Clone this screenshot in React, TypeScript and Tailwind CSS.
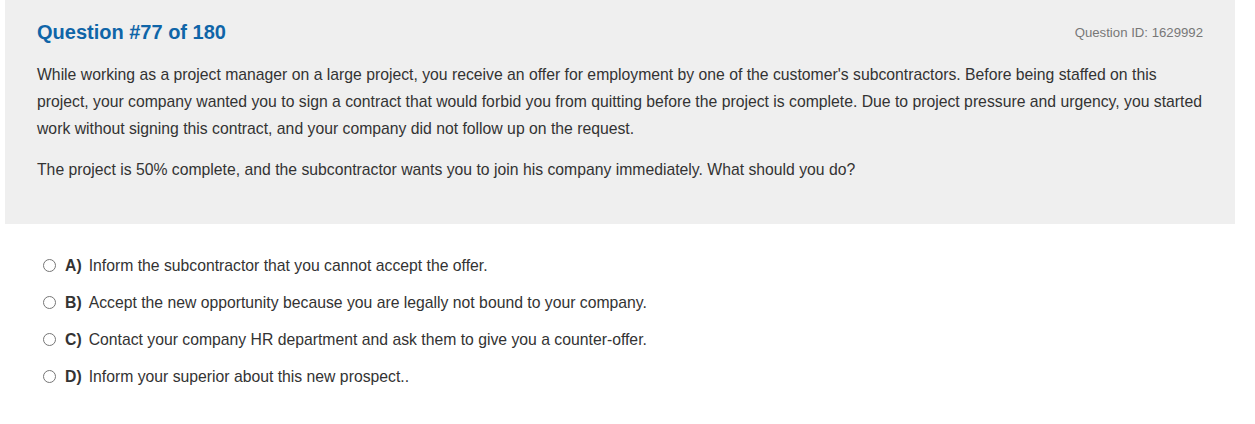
const options = [
  { key: "A", text: "Inform the subcontractor that you cannot accept the offer." },
  { key: "B", text: "Accept the new opportunity because you are legally not bound to your company." },
  { key: "C", text: "Contact your company HR department and ask them to give you a counter-offer." },
  { key: "D", text: "Inform your superior about this new prospect.." },
];

export default function App() {
  return (
    <div className="min-h-[424px] w-[1255px] bg-white font-['Liberation_Sans',Arial,sans-serif] text-[#333]">
      <div className="ml-[5px] h-[224px] w-[1230px] bg-[#efefef] px-[32px] pt-[19px]">
        <div className="flex items-center justify-between">
          <h2 className="text-[20px] font-bold leading-[26px] text-[#0f65a8]">Question #77 of 180</h2>
          <span className="mt-[2px] text-[13.2px] text-[#777]">Question ID: 1629992</span>
        </div>
        <p className="mt-[16px] text-[15.75px] leading-[27px]">
          While working as a project manager on a large project, you receive an offer for employment by one of the customer's subcontractors. Before being staffed on this project, your company wanted you to sign a contract that would forbid you from quitting before the project is complete. Due to project pressure and urgency, you started work without signing this contract, and your company did not follow up on the request.
        </p>
        <p className="mt-[14px] text-[15.75px] leading-[27px]">
          The project is 50% complete, and the subcontractor wants you to join his company immediately. What should you do?
        </p>
      </div>
      <div className="mt-[28px] flex flex-col gap-[10px] pl-[43px]">
        {options.map((o) => (
          <label key={o.key} className="flex h-[27px] items-center text-[15.75px]">
            <span className="mr-[9px] h-[13px] w-[13px] rounded-full border border-[#767676] bg-white" />
            <span className="mr-[7px] font-bold">{o.key})</span>
            <span>{o.text}</span>
          </label>
        ))}
      </div>
    </div>
  );
}
